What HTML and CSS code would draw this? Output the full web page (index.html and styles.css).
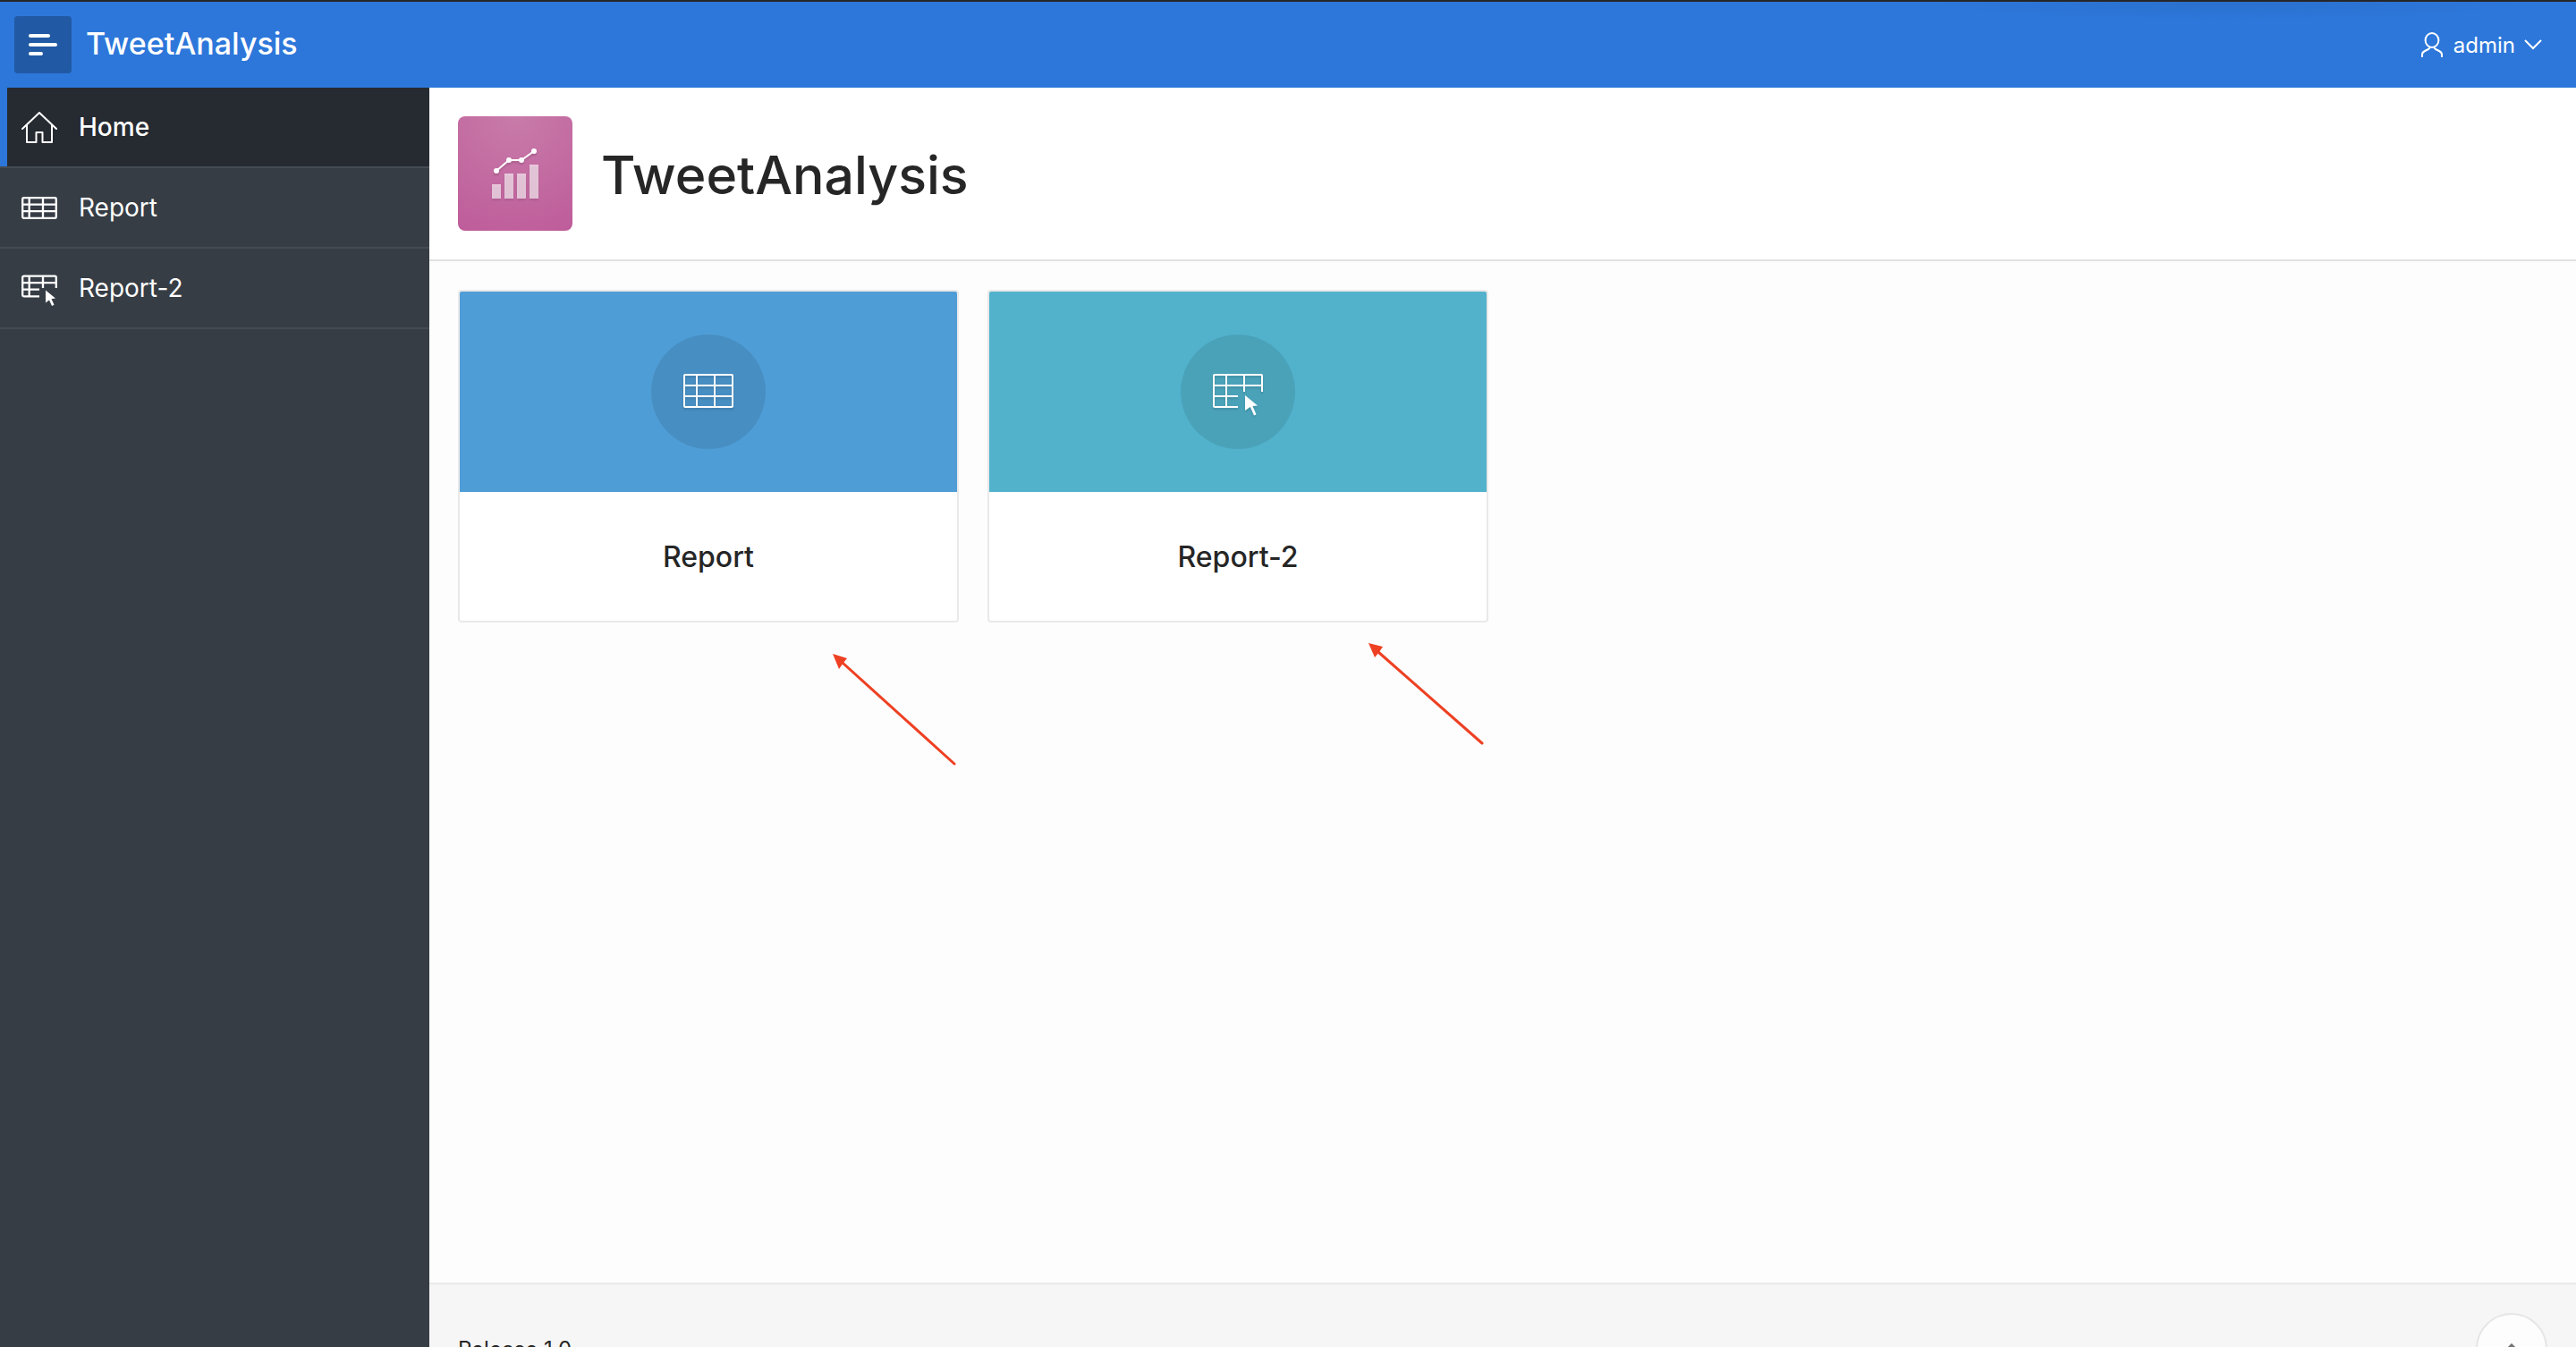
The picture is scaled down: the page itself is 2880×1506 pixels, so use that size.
FILE: index.html
```html
<!DOCTYPE html>
<html lang="en">
<head>
<meta charset="utf-8">
<meta name="viewport" content="width=device-width, initial-scale=1">
<title>TweetAnalysis</title>
<link rel="stylesheet" href="styles.css">
</head>
<body>
<div class="app">
  <header class="topbar">
    <button class="nav-toggle" type="button" aria-label="Toggle navigation">
      <svg width="32" height="24" viewBox="0 0 32 24"><path d="M2 2h20M2 12h28M2 22h12" fill="none" stroke="currentColor" stroke-width="4" stroke-linecap="round"/></svg>
    </button>
    <a class="brand" href="#">TweetAnalysis</a>
    <button class="user-menu" type="button">
      <svg width="28" height="28" viewBox="0 0 28 28"><g fill="none" stroke="currentColor" stroke-width="2"><ellipse cx="14" cy="9" rx="7.4" ry="8"/><path d="M3 28v-3c0-2 1-3 3-4l4-2c1-.6 1.500-1.300 1.500-2.500M25 28v-3c0-2-1-3-3-4l-4-2c-1-.6-1.500-1.300-1.500-2.500"/></g></svg>
      <span>admin</span>
      <svg width="20" height="12" viewBox="0 0 20 12"><path d="M1 1l9 9 9-9" fill="none" stroke="currentColor" stroke-width="2"/></svg>
    </button>
  </header>
  <div class="layout">
    <nav class="sidebar" aria-label="Main">
      <a class="nav-item is-current" href="#" aria-current="page">
        <svg width="40" height="40" viewBox="0 0 40 40"><g fill="none" stroke="currentColor" stroke-width="2" stroke-linejoin="round" stroke-linecap="round"><path d="M1 22L20 4l19 18"/><path d="M6 18v19h10.500V26h7v11H34V18"/></g></svg>
        <span>Home</span>
      </a>
      <a class="nav-item" href="#">
        <svg width="40" height="40" viewBox="0 0 40 40"><g fill="none" stroke="currentColor" stroke-width="2.300"><rect x="1.200" y="9.200" width="37.600" height="22.600" rx="1.500"/><path d="M1 16.700h38M1 24.200h38M8.700 9v23M24 9v23"/></g></svg>
        <span>Report</span>
      </a>
      <a class="nav-item" href="#">
        <svg width="40" height="40" viewBox="0 0 40 40"><g fill="none" stroke="currentColor" stroke-width="2.300"><path d="M20 29.300H2.700a1.500 1.500 0 0 1-1.500-1.500V8.200a1.500 1.500 0 0 1 1.500-1.500h34.600a1.500 1.500 0 0 1 1.500 1.500V20M1 14.200h38M1 21.700h19M8.700 7v22M24 7v13"/></g><path d="M27 22.500l11 9-4.500.800 3 6.500-2.500 1.200-3-6.500-4 3z" fill="currentColor"/></svg>
        <span>Report-2</span>
      </a>
    </nav>
    <div class="page">
      <header class="hero">
        <span class="hero-icon">
          <svg width="128" height="128" viewBox="0 0 128 128"><path d="M38 76h10v16H38zM52 64h10v28H52zM66 64h10v28H66zM80 54h10v38H80z" fill="#fff" fill-opacity=".62"/><path d="M43 61l14-12h14l14-10" fill="none" stroke="#fff" stroke-width="2"/><g fill="#fff"><circle cx="43" cy="61" r="3"/><circle cx="57" cy="49" r="3"/><circle cx="71" cy="49" r="3"/><circle cx="85" cy="39" r="3"/></g></svg>
        </span>
        <h1 class="hero-title">TweetAnalysis</h1>
      </header>
      <main class="content">
        <ul class="cards">
          <li class="card-slot">
            <a class="card" href="#">
              <span class="card-top card-top-blue"><span class="card-badge">
                <svg width="56" height="56" viewBox="0 0 56 56"><g fill="none" stroke="currentColor" stroke-width="2"><rect x="1" y="9" width="54" height="36" rx="1"/><path d="M1 21h54M1 33h54M15 9v36M35 9v36"/></g></svg>
              </span></span>
              <span class="card-title">Report</span>
            </a>
            <svg class="arrow arrow-first" width="140" height="128" viewBox="0 0 140 128"><path d="M11 10l125 113" stroke="#ee4023" stroke-width="3" stroke-linecap="round"/><path d="M0 0l16 5-4 5-5 7z" fill="#ee4023"/></svg>
          </li>
          <li class="card-slot">
            <a class="card" href="#">
              <span class="card-top card-top-teal"><span class="card-badge">
                <svg width="56" height="56" viewBox="0 0 56 56"><path d="M28 45H2a1 1 0 0 1-1-1V10a1 1 0 0 1 1-1h52a1 1 0 0 1 1 1v18M1 21h54M1 33h27M15 9v36M35 9v19" fill="none" stroke="currentColor" stroke-width="2"/><path d="M36 32l14 11.500-5.500.500 4 9.500-2.500 1-4.200-9.500-5.800 4z" fill="currentColor"/></svg>
              </span></span>
              <span class="card-title">Report-2</span>
            </a>
            <svg class="arrow arrow-second" width="132" height="116" viewBox="0 0 132 116"><path d="M11 10l116 102" stroke="#ee4023" stroke-width="3" stroke-linecap="round"/><path d="M0 0l16 4-4 6-5 6z" fill="#ee4023"/></svg>
          </li>
        </ul>
      </main>
      <footer class="footer">
        <span>Release 1.0</span>
        <button class="to-top" type="button" aria-label="Back to top">
          <svg width="20" height="12" viewBox="0 0 20 12"><path d="M1 11l9-9 9 9" fill="none" stroke="currentColor" stroke-width="3"/></svg>
        </button>
      </footer>
    </div>
  </div>
</div>
</body>
</html>
```
FILE: styles.css
```css
* { box-sizing: border-box; }

html, body {
  height: 100%;
  margin: 0;
  overflow: hidden;
}

body {
  font-family: Inter, "Liberation Sans", sans-serif;
  font-size: 24px;
  color: #262626;
  background: #fdfdfd;
}

a { color: inherit; text-decoration: none; }

button {
  border: 0;
  padding: 0;
  font: inherit;
  color: inherit;
  background: none;
  cursor: pointer;
}

svg { display: block; flex: none; }

.app {
  display: flex;
  flex-direction: column;
  min-height: calc(100vh + 74px);
}

.topbar {
  display: flex;
  align-items: center;
  gap: 16px;
  padding: 16px 38px 16px 16px;
  border-top: 2px solid #262626;
  color: #fff;
  background: radial-gradient(closest-side at 50% 0, rgba(0, 0, 0, .05), transparent) 98% 0 / 24% 20px no-repeat #2d77da;
  background: radial-gradient(50% 100% at 50% 0, rgba(0, 0, 0, .06), transparent) 98% 0 / 24% 20px no-repeat #2d77da;
}

.nav-toggle {
  display: grid;
  place-items: center;
  width: 64px;
  height: 64px;
  border-radius: 4px;
  background: #2159a4;
}

.brand {
  padding-bottom: 2px;
  font-size: 34px;
  font-weight: 500;
  line-height: 48px;
}

.user-menu {
  display: flex;
  align-items: center;
  gap: 10px;
  margin-left: auto;
}

.layout { display: flex; flex: 1; }

.sidebar {
  flex: 0 0 480px;
  color: #fff;
  background: #363d45;
}

.nav-item {
  display: flex;
  align-items: center;
  gap: 24px;
  height: 90px;
  padding: 0 24px;
  border-bottom: 2px solid #444b53;
  font-size: 28px;
}

.is-current {
  font-weight: 500;
  background: linear-gradient(90deg, #2d77da 8px, #262a31 8px);
}

.page {
  display: flex;
  flex: 1;
  flex-direction: column;
}

.hero {
  display: flex;
  align-items: center;
  gap: 32px;
  padding: 32px;
  border-bottom: 2px solid #e2e2e2;
  background: #fff;
}

.hero-icon {
  border-radius: 8px;
  background: radial-gradient(circle at 50% 0, #c87ba9, #be5c9a);
}

.hero-icon svg { filter: drop-shadow(0 2px 1px rgba(0, 0, 0, .15)); }

.hero-title {
  margin: 0;
  padding-top: 4px;
  font-size: 59px;
  font-weight: 500;
  line-height: 80px;
}

.content { flex: 1; padding: 32px; }

.cards {
  display: grid;
  grid-template-columns: repeat(4, 1fr);
  gap: 32px;
  margin: 0;
  padding: 0;
  list-style: none;
}

.card-slot { position: relative; }

.card {
  display: block;
  overflow: hidden;
  border: 2px solid #e9e9e9;
  border-radius: 4px;
  background: #fff;
}

.card-top {
  display: grid;
  place-items: center;
  height: 224px;
  color: #fff;
}

.card-top-blue { background: #4f9dd6; }
.card-top-teal { background: #52b2cc; }

.card-badge {
  display: grid;
  place-items: center;
  width: 128px;
  height: 128px;
  border-radius: 50%;
  background: rgba(0, 0, 0, .09);
}

.card-badge svg { filter: drop-shadow(0 2px 1px rgba(0, 0, 0, .12)); }

.card-title {
  display: block;
  padding: 49px 32px 47px;
  font-size: 32px;
  font-weight: 500;
  line-height: 48px;
  text-align: center;
}

/* Pointers drawn over the page below each card */
.arrow { position: absolute; }
.arrow-first { left: 419px; top: 407px; }
.arrow-second { left: 426px; top: 395px; }

.footer {
  display: flex;
  align-items: center;
  justify-content: space-between;
  height: 146px;
  padding: 0 32px;
  border-top: 2px solid #e9e9e9;
  background: #f6f6f6;
}

.to-top {
  display: grid;
  place-items: center;
  width: 80px;
  height: 80px;
  border: 2px solid #e6e6e6;
  border-radius: 50%;
  color: #737373;
  background: #fdfdfd;
}
```
